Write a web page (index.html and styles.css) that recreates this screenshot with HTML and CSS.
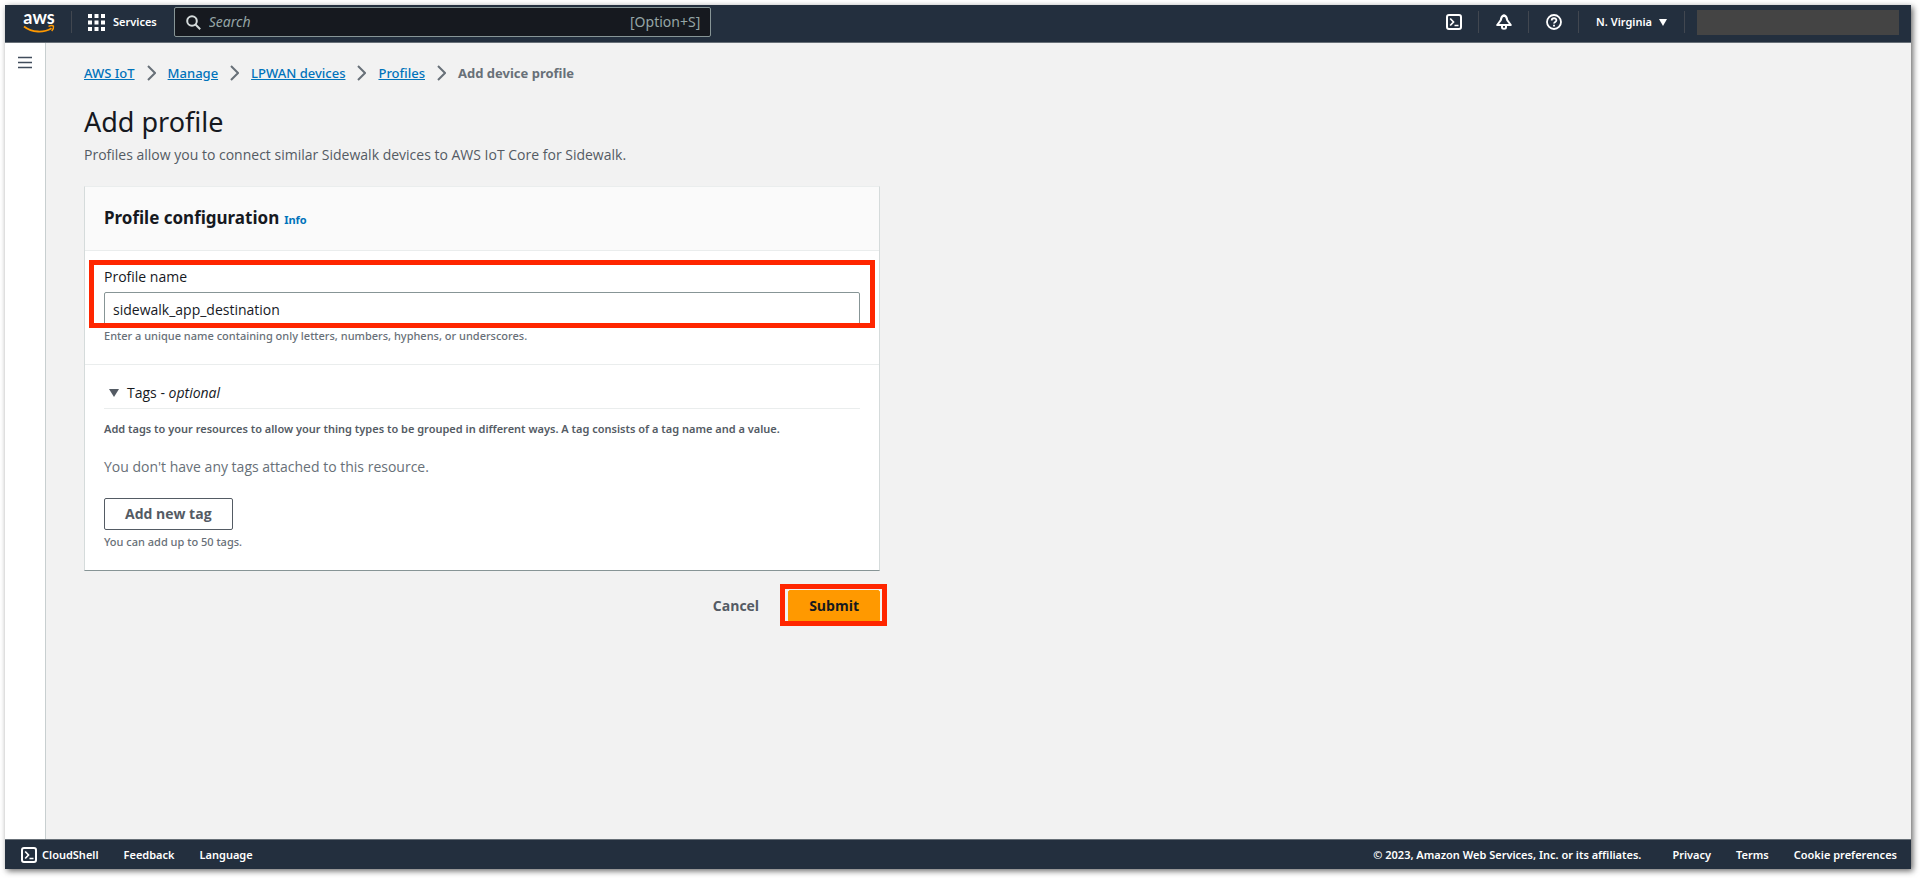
FILE: index.html
```
<!DOCTYPE html>
<html lang="en">
<head>
    <meta charset="UTF-8">
    <meta name="viewport" content="width=device-width, initial-scale=1.0">
    <title>Add profile - AWS IoT</title>
    <link rel="stylesheet" href="styles.css">
</head>
<body>
    <div class="window">
        <header class="topnav">
            <a class="logo" href="#" aria-label="AWS home">
                <svg width="32" height="32" viewBox="0 0 32 32">
                    <text class="logo-text" x="16" y="18" text-anchor="middle">aws</text>
                    <path d="M1 20.500c8 6.300 20 6.500 27.500 1.700" fill="none" stroke="#ff9900" stroke-width="1.800"/>
                    <path d="M25.500 20.300c2-.9 4.300-.8 5-.2.300 1.500-.5 3.700-1.800 5" fill="none" stroke="#ff9900" stroke-width="1.400"/>
                </svg>
            </a>
            <button class="nav-item services" type="button">
                <svg width="17" height="17" viewBox="0 0 17 17" fill="#fff">
                    <path d="M0 0h4v4H0zM6.500 0h4v4h-4zM13 0h4v4h-4zM0 6.500h4v4H0zM6.500 6.500h4v4h-4zM13 6.500h4v4h-4zM0 13h4v4H0zM6.500 13h4v4h-4zM13 13h4v4h-4z"/>
                </svg>
                Services
            </button>
            <form class="search">
                <svg width="15" height="15" viewBox="0 0 15 15" fill="none" stroke="#d5dbdb" stroke-width="2">
                    <circle cx="6" cy="6" r="4.800"/>
                    <path d="M9.500 9.500l4.700 4.700"/>
                </svg>
                <input type="text" placeholder="Search" aria-label="Search">
                <span class="shortcut">[Option+S]</span>
            </form>
            <div class="nav-right">
                <button class="nav-item icon-item" type="button" aria-label="CloudShell">
                    <svg width="16" height="16" viewBox="0 0 16 16" fill="none" stroke="#fff" stroke-width="2">
                        <rect x="1" y="1" width="14" height="14" rx="2"/>
                        <path d="M4.200 4.500L7.500 8l-3.300 3.500M8.500 11.500h4" stroke-width="1.700"/>
                    </svg>
                </button>
                <button class="nav-item icon-item" type="button" aria-label="Notifications">
                    <svg width="16" height="16" viewBox="0 0 16 16" fill="none" stroke="#fff" stroke-width="2" stroke-linejoin="round">
                        <path d="M8 1.200C5.800 2 5 3.700 4.800 6.200L1.200 11h13.600l-3.600-4.800C11 3.700 10.200 2 8 1.200z"/>
                        <path d="M6 11.500v1.800c0 2 4 2 4 0v-1.800"/>
                    </svg>
                </button>
                <button class="nav-item icon-item" type="button" aria-label="Help">
                    <svg width="16" height="16" viewBox="0 0 16 16" fill="none" stroke="#fff" stroke-width="1.800">
                        <circle cx="8" cy="8" r="7"/>
                        <path d="M5.700 6.500c0-3 4.700-2.900 4.700-.2 0 1.700-2.400 1.600-2.400 3.300M8 10.700v1.800"/>
                    </svg>
                </button>
                <button class="nav-item region" type="button">
                    N. Virginia
                    <svg width="8" height="7" viewBox="0 0 8 7"><path d="M0 0h8L4 7z" fill="#fff"/></svg>
                </button>
                <div class="account"></div>
            </div>
        </header>

        <div class="page">
            <aside class="sidebar">
                <button class="menu-button" type="button" aria-label="Open navigation">
                    <svg width="14" height="13" viewBox="0 0 14 13"><path d="M0 1.500h14M0 6.500h14M0 11.500h14" stroke="#414d5c" stroke-width="1.500"/></svg>
                </button>
            </aside>

            <main class="content">
                <nav class="breadcrumbs" aria-label="Breadcrumbs">
                    <a href="#">AWS IoT</a>
                    <svg width="9" height="16" viewBox="0 0 9 16"><path d="M1 1l7 7-7 7"/></svg>
                    <a href="#">Manage</a>
                    <svg width="9" height="16" viewBox="0 0 9 16"><path d="M1 1l7 7-7 7"/></svg>
                    <a href="#">LPWAN devices</a>
                    <svg width="9" height="16" viewBox="0 0 9 16"><path d="M1 1l7 7-7 7"/></svg>
                    <a href="#">Profiles</a>
                    <svg width="9" height="16" viewBox="0 0 9 16"><path d="M1 1l7 7-7 7"/></svg>
                    <span class="current">Add device profile</span>
                </nav>

                <h1>Add profile</h1>
                <p class="description">Profiles allow you to connect similar Sidewalk devices to AWS IoT Core for Sidewalk.</p>

                <form class="profile-form">
                    <section class="card">
                        <div class="card-header">
                            <h2>Profile configuration</h2>
                            <a class="info" href="#">Info</a>
                        </div>

                        <div class="field">
                            <div class="field-body">
                                <label for="profile-name">Profile name</label>
                                <input type="text" id="profile-name" value="sidewalk_app_destination">
                            </div>
                            <p class="hint">Enter a unique name containing only letters, numbers, hyphens, or underscores.</p>
                        </div>

                        <div class="tags">
                            <button class="tags-toggle" type="button" aria-expanded="true">
                                <svg width="10" height="8" viewBox="0 0 10 8"><path d="M0 0h10L5 8z" fill="#545b64"/></svg>
                                <span>Tags - <em>optional</em></span>
                            </button>
                            <p class="tags-help">Add tags to your resources to allow your thing types to be grouped in different ways. A tag consists of a tag name and a value.</p>
                            <p class="tags-empty">You don't have any tags attached to this resource.</p>
                            <button class="btn" type="button">Add new tag</button>
                            <p class="hint">You can add up to 50 tags.</p>
                        </div>
                    </section>

                    <div class="actions">
                        <button class="btn btn-link" type="button">Cancel</button>
                        <div class="submit-wrap">
                            <button class="btn btn-primary" type="submit">Submit</button>
                        </div>
                    </div>
                </form>
            </main>
        </div>

        <footer class="footer">
            <button class="footer-shell" type="button">
                <svg width="16" height="16" viewBox="0 0 16 16" fill="none" stroke="#fff" stroke-width="2">
                    <rect x="1" y="1" width="14" height="14" rx="2"/>
                    <path d="M4.200 4.500L7.500 8l-3.300 3.500M8.500 11.500h4" stroke-width="1.700"/>
                </svg>
                CloudShell
            </button>
            <a href="#">Feedback</a>
            <a href="#">Language</a>
            <span class="copyright">© 2023, Amazon Web Services, Inc. or its affiliates.</span>
            <a href="#">Privacy</a>
            <a href="#">Terms</a>
            <a href="#">Cookie preferences</a>
        </footer>
    </div>
</body>
</html>
```

FILE: styles.css
```
:root {
    --nav: #232f3e;
    --text: #16191f;
    --text-secondary: #545b64;
    --text-hint: #687078;
    --link: #0073bb;
    --orange: #ff9900;
    --highlight: #ff2600;
    --font-small: "Noto Sans", sans-serif;
}

* {
    margin: 0;
    padding: 0;
    box-sizing: border-box;
}

body {
    background: #fff;
    color: var(--text);
    font-family: "Open Sans", "Noto Sans", sans-serif;
    font-size: 14px;
    line-height: 20px;
}

button,
input {
    font: inherit;
    color: inherit;
    background: none;
    border: none;
}

button {
    cursor: pointer;
}

svg {
    display: block;
    flex: none;
}

.window {
    display: flex;
    flex-direction: column;
    min-height: calc(100vh - 14px);
    margin: 5px 9px 9px 5px;
    box-shadow: 2px 2px 6px rgba(0, 0, 0, 0.6);
}

/* Top navigation */
.topnav {
    display: flex;
    align-items: center;
    height: 38px;
    padding-bottom: 3px;
    background: var(--nav);
    border-bottom: 1px solid #687078;
    color: #fff;
    font-family: var(--font-small);
    font-size: 11px;
    font-weight: 600;
}

.logo {
    padding: 0 16px 0 18px;
}

.logo-text {
    font-family: Lato, sans-serif;
    font-size: 18px;
    font-weight: 700;
    fill: #fff;
}

.nav-item {
    display: flex;
    align-items: center;
    height: 22px;
}

.services {
    gap: 8px;
    padding: 0 17px 0 16px;
    border-left: 1px solid #414750;
}

.search {
    display: flex;
    align-items: center;
    gap: 8px;
    width: 28.2%;
    height: 30px;
    padding: 0 10px 0 11px;
    background: #16191f;
    border: 1px solid #879596;
    border-radius: 2px;
    font-size: 14px;
    font-weight: 400;
}

.search input {
    flex: 1;
    min-width: 0;
    outline: none;
}

.search input::placeholder {
    color: #95a5a6;
    font-style: italic;
}

.shortcut {
    color: #95a5a6;
}

.nav-right {
    display: flex;
    align-items: center;
    margin-left: auto;
    padding-right: 12px;
}

.nav-right .nav-item {
    border-right: 1px solid #414750;
}

.icon-item {
    padding: 0 16px 0 17px;
}

.region {
    gap: 7px;
    padding: 0 17px;
}

.account {
    width: 202px;
    height: 25px;
    margin-left: 12px;
    background: #444;
}

/* Page body */
.page {
    display: flex;
    flex: 1;
    background: #f2f2f2;
}

.sidebar {
    width: 41px;
    padding-top: 13px;
    background: #fff;
    border-right: 1px solid #c8cfd0;
}

.menu-button {
    display: block;
    margin: 0 auto;
}

.content {
    flex: 1;
    max-width: 873px;
    padding: 20px 39px 20px 38px;
}

.breadcrumbs {
    display: flex;
    align-items: center;
    gap: 12px;
    margin-bottom: 20px;
    font-family: var(--font-small);
    font-size: 13px;
    font-weight: 500;
}

.breadcrumbs svg {
    fill: none;
    stroke: #687078;
    stroke-width: 2;
}

.breadcrumbs a {
    color: var(--link);
}

.current {
    color: var(--text-hint);
    font-weight: 700;
}

h1 {
    margin-bottom: 4px;
    font-family: var(--font-small);
    font-size: 27px;
    font-weight: 400;
    line-height: 38px;
}

.description {
    margin-bottom: 21px;
    color: var(--text-secondary);
}

.card {
    background: #fff;
    border: 1px solid #d5dbdb;
    border-top-color: #eaeded;
    border-bottom: 1px solid #879596;
}

.card-header {
    display: flex;
    align-items: baseline;
    gap: 5px;
    padding: 19px 19px 20px;
    background: #fafafa;
    border-bottom: 1px solid #eaeded;
    font-family: var(--font-small);
}

h2 {
    font-size: 17px;
    font-weight: 700;
    line-height: 24px;
}

.info {
    color: var(--link);
    font-size: 11px;
    font-weight: 700;
    text-decoration: none;
}

.field {
    padding: 16px 19px 18px;
    border-bottom: 1px solid #eaeded;
}

.field-body {
    position: relative;
}

.field-body label {
    display: block;
    margin-bottom: 5px;
}

.field-body input {
    display: block;
    width: 100%;
    height: 34px;
    padding: 0 8px;
    background: #fff;
    border: 1px solid #879596;
    border-radius: 2px;
}

/* Red frames around the parts the user has to fill in or press */
.field-body::after,
.submit-wrap::after {
    content: "";
    position: absolute;
    border: 5px solid var(--highlight);
    pointer-events: none;
}

.field-body::after {
    inset: -7px -15px -2px;
}

.hint {
    color: var(--text-hint);
    font-family: var(--font-small);
    font-size: 11px;
    font-weight: 500;
}

.tags {
    padding: 18px 19px;
}

.tags-toggle {
    display: flex;
    align-items: center;
    gap: 8px;
    width: 100%;
    padding: 0 5px 5px;
    border-bottom: 1px solid #eaeded;
    text-align: left;
}

.tags-help {
    margin: 10px 0 18px;
    color: var(--text-secondary);
    font-family: var(--font-small);
    font-size: 11px;
    font-weight: 600;
}

.tags-empty {
    margin-bottom: 21px;
    color: var(--text-hint);
}

.btn {
    height: 32px;
    padding: 0 20px;
    background: #fff;
    border: 1px solid var(--text-secondary);
    border-radius: 2px;
    color: var(--text-secondary);
    font-weight: 700;
}

.tags .hint {
    margin-top: 2px;
}

.actions {
    display: flex;
    justify-content: flex-end;
    gap: 8px;
    padding-top: 19px;
}

.btn-link {
    background: none;
    border-color: transparent;
}

.submit-wrap {
    position: relative;
    background: #fff;
}

.submit-wrap::after {
    inset: -6px -7px -4px -8px;
}

.btn-primary {
    background: var(--orange);
    border-color: var(--orange);
    color: var(--text);
}

/* Footer */
.footer {
    display: flex;
    align-items: center;
    gap: 25px;
    height: 30px;
    padding: 0 14px 0 16px;
    background: var(--nav);
    border-top: 1px solid #687078;
    color: #fff;
    font-family: var(--font-small);
    font-size: 11px;
    font-weight: 600;
}

.footer a {
    color: #fff;
    text-decoration: none;
}

.footer-shell {
    display: flex;
    align-items: center;
    gap: 5px;
}

.copyright {
    margin-left: auto;
    margin-right: 6px;
}
```
